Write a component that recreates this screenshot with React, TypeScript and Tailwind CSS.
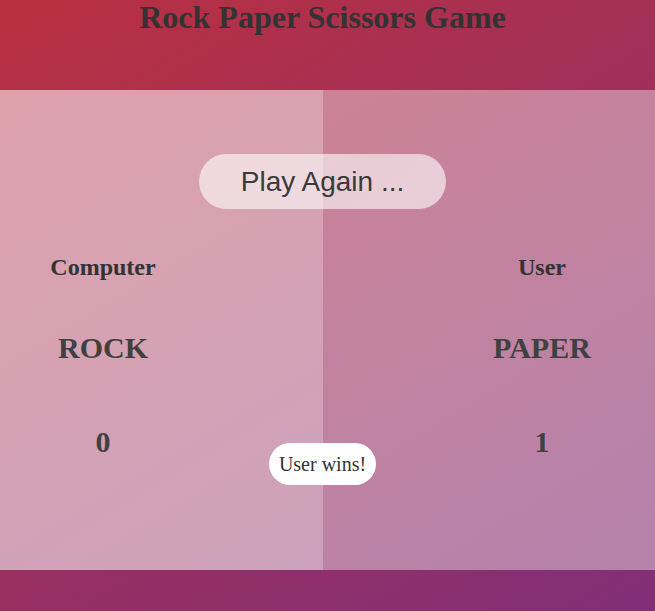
import React from "react";

export default function App() {
  const serif = { fontFamily: '"Liberation Serif", "Times New Roman", serif' } as React.CSSProperties;
  return (
    <div
      className="w-[655px] h-[611px] overflow-hidden bg-[linear-gradient(149deg,#ba3040,#812f78)] text-[#333]"
      style={serif}
    >
      <header className="h-[90px] w-[645px]">
        <h1 className="text-[32px] font-bold leading-[32px] pt-[1px] text-center text-[#333]">
          Rock Paper Scissors Game
        </h1>
      </header>
      <main className="h-[480px] bg-[linear-gradient(to_right,rgba(255,255,255,0.55)_323px,rgba(255,255,255,0.4)_323px)]">
        <div className="w-[645px] pt-[64px]">
          <div className="flex justify-center">
            <button
              className="h-[55px] w-[247px] rounded-full bg-white/60 text-[28px] leading-[32px] text-[#3a3a3a]"
              style={{ fontFamily: '"Liberation Sans", Arial, sans-serif' }}
            >
              Play Again ...
            </button>
          </div>
          <div className="grid grid-cols-[206px_1fr_206px] mt-[44px]">
            <div className="flex flex-col items-center">
              <h2 className="text-[24px] font-bold leading-[28px]">Computer</h2>
              <div className="mt-[50px] text-[30px] font-bold leading-[34px] text-[#404040]">ROCK</div>
              <div className="mt-[60px] text-[30px] font-bold leading-[34px] text-[#404040]">0</div>
            </div>
            <div className="flex flex-col items-center">
              <div className="mt-[190px] rounded-full bg-white px-[10px] h-[42px] flex items-center text-[20px] leading-[22px]">
                User wins!
              </div>
            </div>
            <div className="flex flex-col items-center">
              <h2 className="text-[24px] font-bold leading-[28px]">User</h2>
              <div className="mt-[50px] text-[30px] font-bold leading-[34px] text-[#404040]">PAPER</div>
              <div className="mt-[60px] text-[30px] font-bold leading-[34px] text-[#404040]">1</div>
            </div>
          </div>
        </div>
      </main>
      <footer className="h-[41px]" />
    </div>
  );
}
